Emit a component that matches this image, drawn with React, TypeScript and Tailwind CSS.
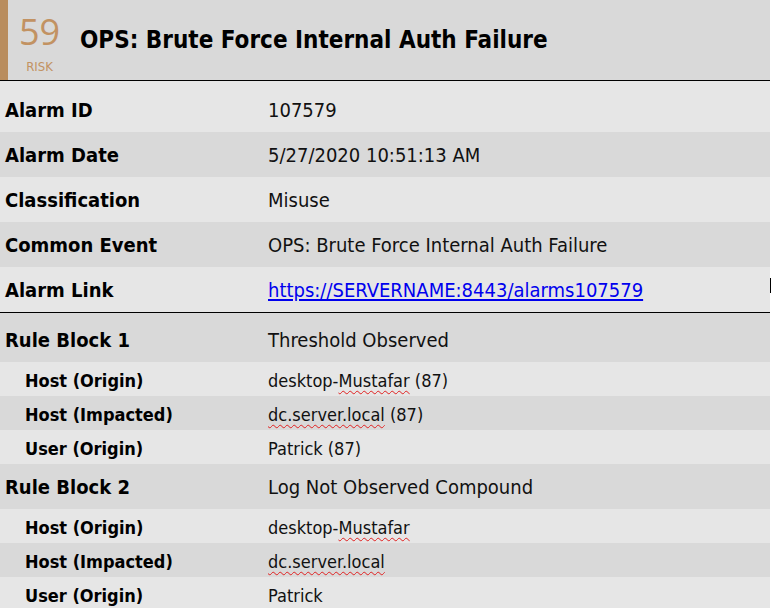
const body = '"DejaVu Sans Condensed", "DejaVu Sans", sans-serif';

type Row = {
  label: string;
  value: React.ReactNode;
  sub?: boolean;
};

const spell = "underline decoration-wavy decoration-[#e02020] decoration-1 underline-offset-[3px]";

const details: Row[] = [
  { label: "Alarm ID", value: "107579" },
  { label: "Alarm Date", value: "5/27/2020 10:51:13 AM" },
  { label: "Classification", value: "Misuse" },
  { label: "Common Event", value: "OPS: Brute Force Internal Auth Failure" },
  {
    label: "Alarm Link",
    value: (
      <a href="#" className="text-[#0000ee] underline underline-offset-2">
        https://SERVERNAME:8443/alarms107579
      </a>
    ),
  },
];

const rules: Row[] = [
  { label: "Rule Block 1", value: "Threshold Observed" },
  {
    label: "Host (Origin)",
    sub: true,
    value: (
      <>
        desktop-<span className={spell}>Mustafar</span> (87)
      </>
    ),
  },
  {
    label: "Host (Impacted)",
    sub: true,
    value: (
      <>
        <span className={spell}>dc.server.local</span> (87)
      </>
    ),
  },
  { label: "User (Origin)", sub: true, value: "Patrick (87)" },
  { label: "Rule Block 2", value: "Log Not Observed Compound" },
  {
    label: "Host (Origin)",
    sub: true,
    value: (
      <>
        desktop-<span className={spell}>Mustafar</span>
      </>
    ),
  },
  {
    label: "Host (Impacted)",
    sub: true,
    value: <span className={spell}>dc.server.local</span>,
  },
  { label: "User (Origin)", sub: true, value: "Patrick" },
];

function Rows({ rows, firstDark }: { rows: Row[]; firstDark?: boolean }) {
  return (
    <div>
      {rows.map((row, i) => {
        const dark = firstDark ? i % 2 === 0 : i % 2 === 1;
        const first = i === 0;
        return (
          <div
            key={i}
            className={`flex items-center leading-[24px] ${dark ? "bg-[#d9d9d9]" : "bg-[#e6e6e6]"} ${
              row.sub
                ? "h-[34px] pt-[4px] text-[18px]"
                : first
                  ? firstDark
                    ? "h-[49px] pt-[5px] text-[20px]"
                    : "h-[51px] pt-[6px] text-[20px]"
                  : "h-[45px] pt-[1px] text-[20px]"
            }`}
          >
            <div className={`w-[268px] shrink-0 font-bold text-black ${row.sub ? "pl-[25px]" : "pl-[5px]"}`}>
              {row.label}
            </div>
            <div className="text-[#111]">{row.value}</div>
          </div>
        );
      })}
    </div>
  );
}

export default function App() {
  return (
    <div className="relative min-h-screen bg-white" style={{ fontFamily: body }}>
      <div className="w-[770px]">
        <div className="flex h-[80px] items-center border-l-[8px] border-[#b98d5e] bg-[#d9d9d9]">
          <div className="flex w-[63px] shrink-0 flex-col items-center pt-[7px]">
            <span
              className="text-[36px] font-normal leading-none text-[#c29262]"
              style={{ fontFamily: '"Open Sans", sans-serif' }}
            >
              59
            </span>
            <span className="mt-[10px] text-[13px] leading-none text-[#c29262]">RISK</span>
          </div>
          <h1 className="ml-[9px] text-[24px] font-bold text-black">OPS: Brute Force Internal Auth Failure</h1>
        </div>
        <div className="h-px bg-black" />
        <Rows rows={details} />
        <div className="h-px bg-black" />
        <Rows rows={rules} firstDark />
      </div>
      <span className="absolute left-[770px] top-[278px] h-[15px] w-px bg-black" />
    </div>
  );
}
